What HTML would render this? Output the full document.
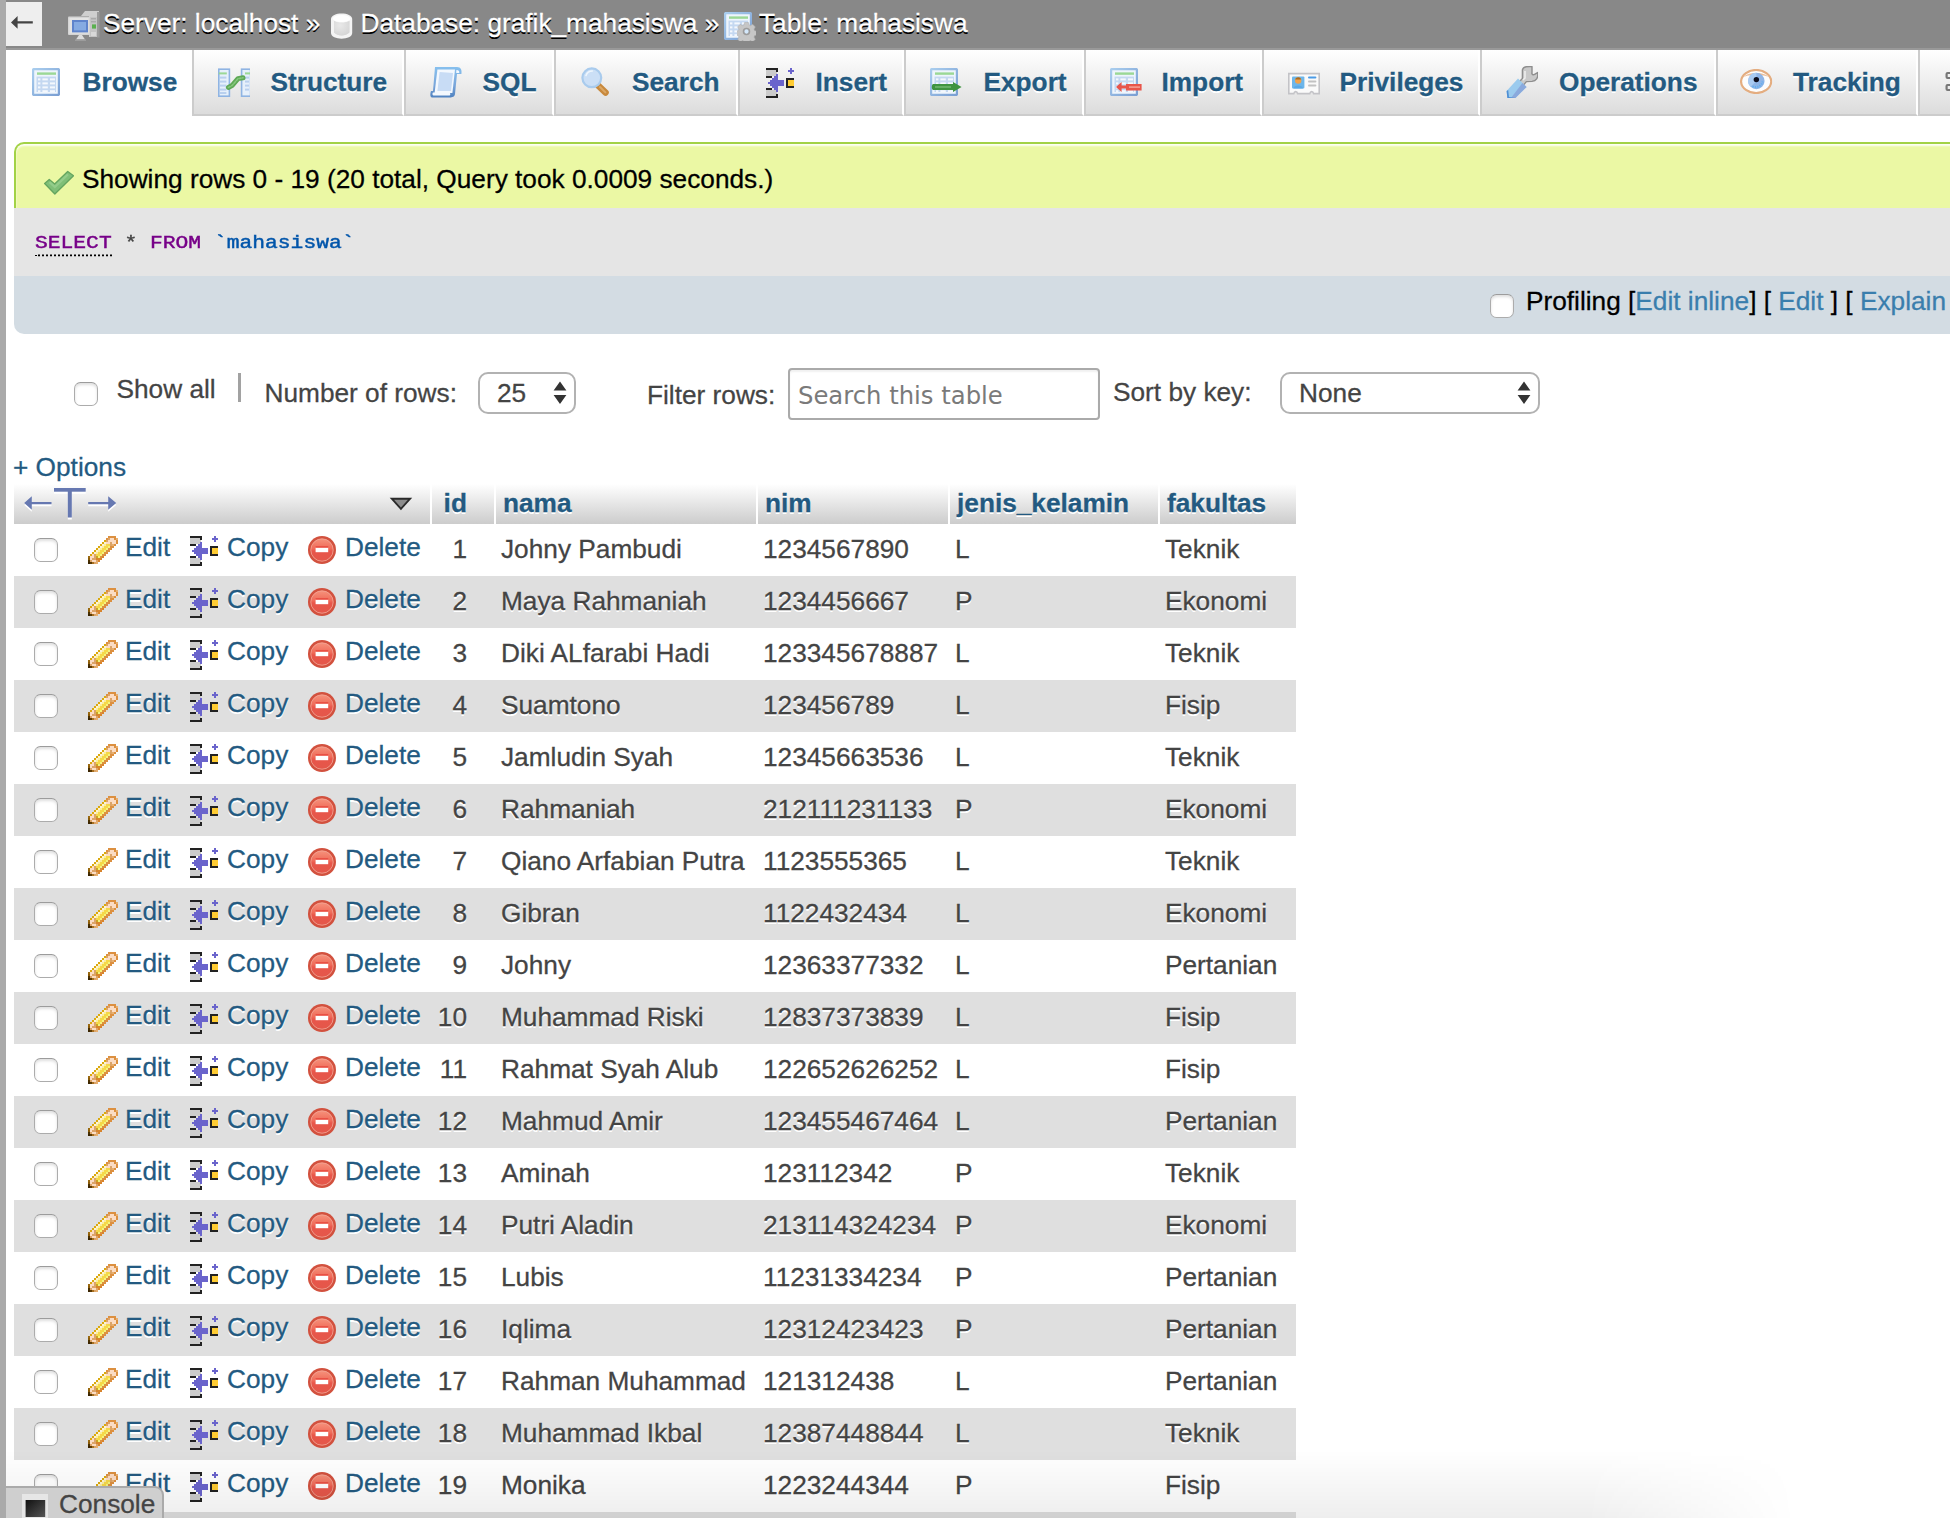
<!DOCTYPE html>
<html lang="en">
<head>
<meta charset="utf-8">
<title>localhost / localhost / grafik_mahasiswa / mahasiswa | phpMyAdmin</title>
<style>
*{box-sizing:border-box;}
html,body{margin:0;padding:0;}
body{width:1950px;height:1518px;overflow:hidden;position:relative;background:#fff;
 font-family:"Liberation Sans",sans-serif;font-size:26.24px;color:#444;-webkit-text-stroke:0.28px currentColor;}
a{color:#235a81;text-decoration:none;}
svg{display:block;overflow:visible;}
#strip{position:absolute;left:0;top:0;width:6px;height:1518px;background:#aaa;}
#topbar{position:absolute;left:6px;top:0;width:1944px;height:50px;background:#888;border-bottom:2px solid #999;}
#back{position:absolute;left:0;top:2px;width:36px;height:44px;background:#eee;}
#back svg{position:absolute;left:5px;top:11px;}
#crumbs{position:absolute;left:0;top:0;height:48px;color:#fff;white-space:nowrap;text-shadow:0 2px 0 #000;}
#crumbs span{position:absolute;top:8px;line-height:30px;white-space:nowrap;}
#crumbs svg{position:absolute;top:10px;}
/* tabs */
#tabs{position:absolute;left:6px;top:50px;width:1944px;height:66px;}
.tab{position:absolute;top:0;height:66px;border-left:2px solid #ccc;border-right:2px solid #fff;border-bottom:2px solid #ccc;
 background:linear-gradient(#fff,#dcdcdc);font-weight:bold;color:#235a81;text-shadow:0 2px 0 #fff;white-space:nowrap;}
.tab.active{background:#fff;border-bottom-color:#fff;border-left-color:#fff;}
.tab svg{position:absolute;left:24px;top:16px;}
.tab span{position:absolute;top:17px;line-height:30px;}
/* result boxes */
#succ{position:absolute;left:14px;top:142px;width:1960px;height:66px;background:#ebf8a4;border:2px solid #a2d246;border-bottom:none;border-radius:10px 0 0 0;color:#000;box-shadow:inset 0 2px 2px rgba(255,255,255,.9);}
#succ svg{position:absolute;left:27px;top:26px;}
#succ span{position:absolute;left:66px;top:19.5px;line-height:30px;white-space:nowrap;}
#sql{position:absolute;left:14px;top:208px;width:1960px;height:68px;background:#e5e5e5;}
#sql code{position:absolute;left:21px;top:20px;line-height:28px;font-family:"Liberation Mono",monospace;font-size:21.3px;white-space:pre;color:#444;transform:scaleY(.83);transform-origin:0 19.6px;-webkit-text-stroke:0.5px currentColor;}
#sql .kw{color:#708;}
#sql .kw.u{border-bottom:2.4px dotted #000;padding-bottom:2px;}
#sql .id{color:#05a;}
#tools{position:absolute;left:14px;top:276px;width:1960px;height:58px;background:#d3dce3;border-radius:0 0 0 10px;color:#000;}
#tools span{position:absolute;top:10px;line-height:30px;white-space:nowrap;}
#tools a{color:#3a7ead;}
.cbx{position:absolute;width:24px;height:24px;border:1.3px solid #acacac;border-top-color:#9c9c9c;border-radius:6.5px;background:#fff;box-shadow:inset 0 2px 3px rgba(0,0,0,.13);}
/* nav */
#nav span{position:absolute;line-height:30px;white-space:nowrap;color:#444;}
.sel{position:absolute;background:#fff;border:2px solid #b2b2b2;border-radius:10px;color:#222;}
.sel span{position:absolute;top:3.5px;left:17px;line-height:30px;}
.sel svg{position:absolute;right:7px;top:7px;}
#filter{position:absolute;left:788px;top:368px;width:312px;height:52px;border:2px solid #aaa;border-radius:4px;background:#fff;box-shadow:inset 0 2px 2px rgba(0,0,0,.06);}
#filter span{position:absolute;left:8px;top:11px;line-height:30px;color:#7a7a7a;font-family:"DejaVu Sans","Liberation Sans",sans-serif;font-size:24.3px;white-space:nowrap;-webkit-text-stroke:0;}
#opts{position:absolute;left:13px;top:452px;line-height:30px;color:#235a81;white-space:nowrap;}
/* table */
#res{position:absolute;left:14px;top:484px;border-collapse:separate;border-spacing:0;table-layout:fixed;width:1282px;}
#res th{height:40px;padding:0;background:linear-gradient(#fff,#ccc);border-right:2px solid #fff;text-align:left;font-weight:bold;color:#235a81;text-shadow:0 2px 0 #fff;position:relative;white-space:nowrap;}
#res th:last-child{border-right:none;}
#res th a{position:absolute;left:7px;top:4px;line-height:30px;}
#res th.hid a{left:11.6px;}
#res td{height:52px;padding:0;position:relative;white-space:nowrap;text-shadow:0 2px 0 #fff;vertical-align:top;line-height:30px;padding-top:10px;}
#res tr.odd td{background:#fff;}
#res tr.even td{background:#dfdfdf;}
.h0{width:418px;}.hid{width:64px;}.hn{width:262px;}.hm{width:192px;}.hj{width:210px;}.hf{width:136px;}
.ftext{position:absolute;left:10px;top:0px;filter:drop-shadow(0 2px 0 #fff);}
.tri{position:absolute;left:374px;top:13px;}
.cb{position:absolute;left:20px;top:14px;width:24px;height:24px;border:1.3px solid #acacac;border-top-color:#9c9c9c;border-radius:6.5px;background:#fff;box-shadow:inset 0 2px 3px rgba(0,0,0,.13);}
.act{position:absolute;top:8px;line-height:30px;}
.ri{position:absolute;top:12px;}
.ri.e{left:74px;}.ri.c{left:176px;}.ri.d{left:294px;}
.act.e{left:111px;}
.act.c{left:213px;}
.act.d{left:331px;}
td.cid{text-align:right;padding-right:29px!important;}
td.cn{padding-left:5px!important;}
td.cm{padding-left:5px!important;}
td.cj{padding-left:5px!important;}
td.cf{padding-left:5px!important;}
/* console */
#consolefade{position:absolute;left:6px;top:1450px;width:1944px;height:68px;pointer-events:none;background:linear-gradient(to bottom,rgba(0,0,0,0),rgba(0,0,0,.065));-webkit-mask-image:linear-gradient(to right,#000 0,#000 1580px,transparent 1790px);mask-image:linear-gradient(to right,#000 0,#000 1580px,transparent 1790px);}
#console{position:absolute;left:6px;top:1486px;width:158px;height:40px;background:#cfcfcf;border:2px solid #aaa;border-left:none;border-radius:0 9px 0 0;color:#444;}
#console span{position:absolute;left:53px;top:1px;line-height:30px;}
#consolebar{position:absolute;left:166px;top:1510px;width:1784px;height:8px;background:#d0d0d0;}
</style>
</head>
<body>
<svg width="0" height="0" style="position:absolute">
<defs>
<linearGradient id="g-tblb" x1="0" y1="0" x2="1" y2="1"><stop offset="0" stop-color="#a9cdee"/><stop offset="1" stop-color="#7a9fd3"/></linearGradient>
<linearGradient id="g-pen" x1="0" y1="0" x2="1" y2="1"><stop offset="0" stop-color="#fff6b0"/><stop offset=".5" stop-color="#f5d848"/><stop offset="1" stop-color="#e08a2a"/></linearGradient>
<linearGradient id="g-del" x1="0" y1="0" x2="0" y2="1"><stop offset="0" stop-color="#f6927c"/><stop offset=".45" stop-color="#ef6a58"/><stop offset=".55" stop-color="#e8564a"/><stop offset="1" stop-color="#e4574a"/></linearGradient>
<linearGradient id="g-sql" x1="0" y1="0" x2="0" y2="1"><stop offset="0" stop-color="#86c0ee"/><stop offset=".6" stop-color="#7aa6da"/><stop offset="1" stop-color="#4f82c0"/></linearGradient>
<linearGradient id="g-con" x1="0" y1="0" x2="1" y2="1"><stop offset="0" stop-color="#111"/><stop offset="1" stop-color="#555"/></linearGradient>
<radialGradient id="g-db" cx=".4" cy=".3" r=".8"><stop offset="0" stop-color="#fff"/><stop offset="1" stop-color="#d9d9d9"/></radialGradient>
<!-- table (browse) glyph 28x28 -->
<symbol id="i-table" viewBox="0 0 28 28">
 <rect x="1" y="1" width="26" height="26" rx="1.5" fill="#eef5fc" stroke="url(#g-tblb)" stroke-width="2.4"/>
 <rect x="5" y="4.4" width="19" height="2.4" fill="#9bd896"/>
 <rect x="4.5" y="8.6" width="19.5" height="15.4" fill="#c4d8f1"/>
 <g fill="#f4f8fd"><rect x="6" y="10.4" width="2.4" height="2"/><rect x="10.4" y="10.4" width="5.4" height="2"/><rect x="18" y="10.4" width="5" height="2"/>
 <rect x="6" y="14.4" width="2.4" height="2"/><rect x="10.4" y="14.4" width="5.4" height="2"/><rect x="18" y="14.4" width="5" height="2"/>
 <rect x="6" y="18.4" width="2.4" height="2"/><rect x="10.4" y="18.4" width="5.4" height="2"/><rect x="18" y="18.4" width="5" height="2"/>
 <rect x="6" y="22.2" width="2.4" height="1.8"/><rect x="10.4" y="22.2" width="5.4" height="1.8"/><rect x="18" y="22.2" width="5" height="1.8"/></g>
</symbol>
<!-- server 32x32 -->
<symbol id="i-server" viewBox="0 0 32 32">
 <path d="M13 6 L17 1 L31 1 L31 27 L21 27 L21 6 Z" fill="#cfcfcf"/>
 <path d="M22 7 L31 7 L31 27 L22 27 Z" fill="#c4c4c4"/>
 <rect x="29" y="2" width="2.5" height="25.5" fill="#9a9a9a"/>
 <rect x="23" y="8" width="5" height="1.4" fill="#aaa"/><rect x="23" y="11" width="5" height="1.4" fill="#aaa"/>
 <rect x="24" y="14.4" width="4" height="4.2" fill="#5ab04e"/>
 <rect x="23" y="22" width="5" height="4" fill="#d8d8d8"/>
 <rect x="0" y="6.6" width="22" height="18.4" rx="1" fill="#d4d4d4"/>
 <rect x="1.4" y="8" width="19.2" height="15.6" fill="#e3e3e3"/>
 <rect x="4" y="10" width="16" height="12.4" fill="#5f84cc"/>
 <rect x="6" y="12" width="12" height="8.4" fill="#86abe2"/>
 <path d="M11 25 L14 25 L17 29.4 L8 29.4 Z" fill="#dcdcdc"/>
 <rect x="7" y="29.4" width="11" height="1.6" fill="#9c9c9c"/>
</symbol>
<!-- db 32x32 -->
<symbol id="i-db" viewBox="0 0 32 32">
 <path d="M5 9 C5 1.5 26.2 1.5 26.2 9 L26.2 23 C26.2 30.5 5 30.5 5 23 Z" fill="#f4f4f4"/>
 <path d="M8 11 C12 13.4 19.4 13.4 23.4 11 L23.4 22.5 C19.4 26.5 12 26.5 8 22.5 Z" fill="#cdcdcd"/>
 <path d="M8 11 C12 13.4 19.4 13.4 23.4 11 L23.4 22.5 C19.4 26.5 12 26.5 8 22.5 Z" fill="url(#g-db)" opacity=".55"/>
 <ellipse cx="15.6" cy="8.5" rx="8.8" ry="3.6" fill="#fff"/>
</symbol>
<!-- gear -->
<symbol id="i-gear" viewBox="-10 -10 20 20">
 <g fill="#c6c6c6" stroke="#acacac" stroke-width=".6">
 <path d="M-2 -9.5h4l.6 2.6 1.6.7 2.3-1.4 2.8 2.8-1.4 2.3.7 1.6 2.6.6v4l-2.6.6-.7 1.6 1.4 2.3-2.8 2.8-2.3-1.4-1.6.7-.6 2.6h-4l-.6-2.6-1.6-.7-2.3 1.4-2.8-2.8 1.4-2.3-.7-1.6-2.6-.6v-4l2.6-.6.7-1.6-1.4-2.3 2.8-2.8 2.3 1.4 1.6-.7z"/></g>
 <circle r="3.1" fill="#d4e8fb" stroke="#9c9c9c" stroke-width="1.7"/>
</symbol>
<!-- structure 32x32 -->
<symbol id="i-struct" viewBox="0 0 32 32">
 <rect x="0.8" y="3.2" width="10.6" height="27" fill="#e6f0fb" stroke="#8fb4e3" stroke-width="1.6"/>
 <rect x="23.6" y="3.2" width="9" height="27" fill="#e6f0fb" stroke="#8fb4e3" stroke-width="1.6"/>
 <rect x="0.8" y="6.4" width="8" height="2" fill="#9bd896"/><rect x="27" y="6.4" width="5" height="2" fill="#9bd896"/>
 <g fill="#b9d0ee"><rect x="2" y="10.6" width="6.4" height="2"/><rect x="2" y="14.6" width="6.4" height="2"/><rect x="2" y="18.6" width="6.4" height="2"/><rect x="2" y="22.6" width="6.4" height="2"/><rect x="2" y="26" width="6.4" height="2"/>
 <rect x="27" y="10.6" width="4" height="2"/><rect x="27" y="14.6" width="4" height="2"/><rect x="27" y="18.6" width="4" height="2"/><rect x="27" y="22.6" width="4" height="2"/></g>
 <path d="M10.4 21.4 L14 19.6 L20 12.6 L25 11.8" fill="none" stroke="#5ea856" stroke-width="5" stroke-linecap="round" stroke-linejoin="round"/>
 <path d="M10.4 21.4 L14 19.6 L20 12.6 L25 11.8" fill="none" stroke="#86c87d" stroke-width="1.6" stroke-linecap="round" stroke-linejoin="round" stroke-dasharray="2 1.6"/>
</symbol>
<!-- sql scroll 32x32 -->
<symbol id="i-sql" viewBox="0 0 32 32">
 <path d="M5 1 L27 1 C31 1 32 4 31.4 8 L27 8 L25 28 C24.6 31 22 31.4 20 31.4 L2 31.4 C0 31 0 28 1 25 L3 25 Z" fill="url(#g-sql)"/>
 <path d="M7.4 3.4 L25 3.4 L22.4 27 L4.6 27 Z" fill="#f3f8fe"/>
 <path d="M9.6 6 L23 7 L21 25 L7.4 25 Z" fill="#c8dcf5"/>
 <path d="M3 26.6 L19.4 26.6 C20.6 27.6 20.6 29 19.6 29.6 L3.4 29.6 C2.2 29 2.2 27.4 3 26.6 Z" fill="#f3f8fe"/>
 <path d="M26.4 4 C29 4 29.6 5.6 29.2 7 L26.2 7 Z" fill="#f3f8fe"/>
</symbol>
<!-- search 32x32 -->
<symbol id="i-search" viewBox="0 0 32 32">
 <path d="M18 19.4 L25.6 26.6" stroke="#c8893c" stroke-width="6.4" stroke-linecap="round" fill="none"/>
 <path d="M20 21 L25.4 26.4" stroke="#dba765" stroke-width="2" stroke-linecap="round" fill="none"/>
 <circle cx="11.8" cy="11.8" r="9.4" fill="#cbdff6" stroke="#a9cbed" stroke-width="2.2"/>
 <path d="M6 9.5 C7 6.6 9.6 5 12.4 5" stroke="#eef6fd" stroke-width="1.6" fill="none" stroke-linecap="round"/>
</symbol>
<!-- insert / copy 32x32 pixel icon, units of 2px, glyph origin at (2,2) in tabs -->
<symbol id="i-ins" viewBox="0 0 14 15" shape-rendering="crispEdges">
 <rect x="0" y="1" width="5.6" height="3" fill="#ccc"/><rect x="0" y="11" width="5.6" height="3" fill="#ccc"/>
 <g fill="#222"><rect x="0" y="0" width="6" height="1"/><rect x="5" y="1" width="1" height="1"/><rect x="0" y="4" width="3" height="1"/>
 <rect x="0" y="10" width="3" height="1"/><rect x="5" y="13" width="1" height="1"/><rect x="0" y="14" width="6" height="1"/>
 <rect x="10" y="5" width="4" height="5"/></g>
 <rect x="11" y="6" width="3" height="3" fill="#fc3"/>
 <g fill="#6a64cc"><rect x="1" y="7" width="1" height="1"/><rect x="2" y="6" width="1" height="3"/><rect x="3" y="5" width="1" height="5"/><rect x="4" y="4" width="1" height="7"/><rect x="5" y="3" width="1" height="9"/><rect x="6" y="6" width="3" height="3"/></g>
 <path d="M12 0h1v1h1v1h-1v1h-1v-1h-1v-1h1z" fill="#6a64cc"/>
</symbol>
<!-- export 32x32 -->
<symbol id="i-export" viewBox="0 0 32 32">
 <use href="#i-table" x="0" y="2" width="28" height="28"/>
 <path d="M3 18 L23 18 L23 16 L31.6 21 L23 26 L23 24 L3 24 C1.4 23 1.4 19 3 18 Z" fill="#3f9440"/>
 <path d="M5 20.4 L21 20.4 L21 21.6 L5 21.6 Z" fill="#7fc27c"/>
</symbol>
<!-- import 32x32 -->
<symbol id="i-import" viewBox="0 0 32 32">
 <use href="#i-table" x="0" y="2" width="28" height="28"/>
 <path d="M6 21 L11.6 16 L11.6 19.6 L16 19.6 L16 18 L31.6 18 L31.6 24.4 L16 24.4 L16 22.6 L11.6 22.6 L11.6 26 Z" fill="#e8554a"/>
 <rect x="19" y="20.4" width="11" height="1.4" fill="#f6a79c"/>
</symbol>
<!-- privileges 32x32 -->
<symbol id="i-priv" viewBox="0 0 32 32">
 <path d="M0.8 7.6 L31.2 7.6 L31.2 27.6 L25.6 27.6 C25 25 22.4 25 21.8 27.6 L9.6 27.6 C9 25 6.4 25 5.8 27.6 L0.8 27.6 Z" fill="#fafafa" stroke="#c3c3c7" stroke-width="1.6"/>
 <rect x="4" y="10.4" width="12.4" height="12" rx="1" fill="#6db6ea"/>
 <circle cx="10.2" cy="14.6" r="3.2" fill="#f0a24a"/>
 <path d="M7.2 13.4 C8 10.6 12.4 10.6 13.2 13.4 Z" fill="#a86a20"/>
 <path d="M5.4 22.4 C6 18.6 14.4 18.6 15 22.4 Z" fill="#5aa9e6"/>
 <rect x="20" y="10.4" width="8.4" height="2" rx="1" fill="#4a9be6"/>
 <rect x="20" y="14.4" width="8.4" height="2" rx="1" fill="#c2c2c2"/>
 <rect x="20" y="18.4" width="8.4" height="2" rx="1" fill="#c2c2c2"/>
</symbol>
<!-- wrench 32x32 -->
<symbol id="i-ops" viewBox="0 0 32 32">
 <path d="M12.6 16.4 L16.4 12.6 L16.4 4 C17 1 20 0 26 0.6 L26 6.4 C25.4 8 27 9.4 28.6 8.4 L31.6 6.6 C32.6 12 30 15 26 15.4 L20.4 15.6 L17 19.6 Z" fill="#c9c9c9" stroke="#8e8e8e" stroke-width="1.4" stroke-linejoin="round"/>
 <path d="M19 5 L19 12 L17 14" stroke="#eee" stroke-width="1.6" fill="none"/>
 <path d="M12 12.6 L20.6 21 L8.4 33 L1.4 32.6 L0.6 25 Z" fill="#9bcbee"/>
 <path d="M16.4 17 L20.6 21 L8.4 33 L4.4 32.8 Z" fill="#8aa9dc"/>
 <path d="M0.6 25 L1.4 32.6 L8.4 33 L9.4 32 L3 31 L2.2 24 Z" fill="#4f8fd4"/>
</symbol>
<!-- eye 32x32 -->
<symbol id="i-eye" viewBox="0 0 32 25">
 <path d="M0.9 12.5 C1.2 5.5 8.6 1 16 1 C23.4 1 30.8 5.5 31.1 12.5 C30.8 19.5 23.4 24 16 24 C8.6 24 1.2 19.5 0.9 12.5 Z" fill="#fdfdfd" stroke="#e4ad80" stroke-width="2.2"/>
 <path d="M3.4 8 C8 2.8 24 2.8 28.6 8 C24 5.2 8 5.2 3.4 8 Z" fill="#ebbd98"/>
 <circle cx="16.2" cy="12" r="8.2" fill="#8fb4e6"/>
 <path d="M16.2 3.8 A8.2 8.2 0 0 0 10.4 17.8 L16.2 12 Z" fill="#a9caf1"/>
 <path d="M12.4 17.4 C16 19.2 21 17.6 22.6 12.6" stroke="#5fb0f0" stroke-width="2" fill="none" stroke-dasharray="1.2 1.2"/>
 <circle cx="16.2" cy="10.6" r="2.7" fill="#0c0c1c"/>
</symbol>
<!-- check 32x26 -->
<symbol id="i-check" viewBox="0 0 32 26">
 <path d="M1.6 14 L6.4 9.8 L12 14.6 L25.6 1.6 L31.6 6 L12.2 25 Z" fill="#7fbf77" stroke="#64a55f" stroke-width="1.4" stroke-linejoin="round"/>
 <path d="M6.6 12.6 L12.2 17.6 L25.8 4.6" fill="none" stroke="#93cc8a" stroke-width="2.4"/>
</symbol>
<!-- pencil 30x28 -->
<symbol id="i-edit" viewBox="0 0 15 14" shape-rendering="crispEdges"><rect x="10" y="0" width="4" height="1" fill="#dc9040"/><rect x="9" y="1" width="1" height="1" fill="#dc9040"/><rect x="10" y="1" width="1" height="1" fill="#dca468"/><rect x="11" y="1" width="2" height="1" fill="#fbdcc4"/><rect x="13" y="1" width="1" height="1" fill="#dc9040"/><rect x="14" y="1" width="1" height="1" fill="#e8b070"/><rect x="8" y="2" width="1" height="1" fill="#dba90e"/><rect x="9" y="2" width="1" height="1" fill="#dca468"/><rect x="10" y="2" width="4" height="1" fill="#fbdcc4"/><rect x="14" y="2" width="1" height="1" fill="#dc9040"/><rect x="7" y="3" width="1" height="1" fill="#dba90e"/><rect x="8" y="3" width="1" height="1" fill="#fdf3d6"/><rect x="9" y="3" width="2" height="1" fill="#fbdcc4"/><rect x="11" y="3" width="1" height="1" fill="#dca468"/><rect x="12" y="3" width="2" height="1" fill="#fbdcc4"/><rect x="14" y="3" width="1" height="1" fill="#dc9040"/><rect x="6" y="4" width="1" height="1" fill="#dba90e"/><rect x="7" y="4" width="1" height="1" fill="#fdf3d6"/><rect x="8" y="4" width="1" height="1" fill="#faee9c"/><rect x="9" y="4" width="2" height="1" fill="#f5d848"/><rect x="11" y="4" width="1" height="1" fill="#dca468"/><rect x="12" y="4" width="1" height="1" fill="#e8b070"/><rect x="13" y="4" width="1" height="1" fill="#dc9040"/><rect x="5" y="5" width="1" height="1" fill="#dba90e"/><rect x="6" y="5" width="1" height="1" fill="#fdf3d6"/><rect x="7" y="5" width="1" height="1" fill="#faee9c"/><rect x="8" y="5" width="2" height="1" fill="#f5d848"/><rect x="10" y="5" width="1" height="1" fill="#f3f47e"/><rect x="11" y="5" width="2" height="1" fill="#dc9040"/><rect x="4" y="6" width="1" height="1" fill="#dba90e"/><rect x="5" y="6" width="1" height="1" fill="#fdf3d6"/><rect x="6" y="6" width="1" height="1" fill="#faee9c"/><rect x="7" y="6" width="2" height="1" fill="#f5d848"/><rect x="9" y="6" width="1" height="1" fill="#f3f47e"/><rect x="10" y="6" width="2" height="1" fill="#dc9040"/><rect x="3" y="7" width="1" height="1" fill="#dba90e"/><rect x="4" y="7" width="1" height="1" fill="#fdf3d6"/><rect x="5" y="7" width="1" height="1" fill="#faee9c"/><rect x="6" y="7" width="2" height="1" fill="#f5d848"/><rect x="8" y="7" width="1" height="1" fill="#f3f47e"/><rect x="9" y="7" width="2" height="1" fill="#dc9040"/><rect x="2" y="8" width="1" height="1" fill="#dba90e"/><rect x="3" y="8" width="1" height="1" fill="#fdf3d6"/><rect x="4" y="8" width="1" height="1" fill="#faee9c"/><rect x="5" y="8" width="2" height="1" fill="#f5d848"/><rect x="7" y="8" width="1" height="1" fill="#f3f47e"/><rect x="8" y="8" width="2" height="1" fill="#dc9040"/><rect x="1" y="9" width="1" height="1" fill="#dba90e"/><rect x="2" y="9" width="1" height="1" fill="#fbdcc4"/><rect x="3" y="9" width="1" height="1" fill="#dca468"/><rect x="4" y="9" width="2" height="1" fill="#f5d848"/><rect x="6" y="9" width="1" height="1" fill="#f3f47e"/><rect x="7" y="9" width="2" height="1" fill="#dc9040"/><rect x="0" y="10" width="1" height="1" fill="#9a6a10"/><rect x="1" y="10" width="2" height="1" fill="#fbdcc4"/><rect x="3" y="10" width="1" height="1" fill="#dca468"/><rect x="4" y="10" width="1" height="1" fill="#c8a424"/><rect x="5" y="10" width="1" height="1" fill="#f3f47e"/><rect x="6" y="10" width="1" height="1" fill="#dc9040"/><rect x="7" y="10" width="1" height="1" fill="#d8842c"/><rect x="0" y="11" width="1" height="1" fill="#8a5a08"/><rect x="1" y="11" width="1" height="1" fill="#fbdcc4"/><rect x="2" y="11" width="2" height="1" fill="#dca468"/><rect x="4" y="11" width="3" height="1" fill="#d8842c"/><rect x="0" y="12" width="1" height="1" fill="#4a3000"/><rect x="1" y="12" width="1" height="1" fill="#dca468"/><rect x="2" y="12" width="2" height="1" fill="#fbdcc4"/><rect x="4" y="12" width="1" height="1" fill="#dca468"/><rect x="5" y="12" width="1" height="1" fill="#d8842c"/><rect x="0" y="13" width="1" height="1" fill="#3a2400"/><rect x="1" y="13" width="1" height="1" fill="#5a3a04"/><rect x="2" y="13" width="1" height="1" fill="#a87020"/><rect x="3" y="13" width="1" height="1" fill="#dca468"/><rect x="4" y="13" width="1" height="1" fill="#e8b070"/></symbol>
<!-- delete 28x28 -->
<symbol id="i-del" viewBox="0 0 28 28">
 <circle cx="14" cy="14" r="14" fill="#d2513e"/>
 <circle cx="14" cy="14" r="11.2" fill="url(#g-del)"/>
 <circle cx="14" cy="14" r="11.2" fill="none" stroke="#f3a898" stroke-width="1" opacity=".8"/>
 <rect x="7.6" y="11.6" width="12.6" height="4.6" fill="#fff"/>
 <rect x="7.6" y="10.2" width="12.6" height="1.4" fill="#e8493e"/>
</symbol>
<!-- <-T-> -->
<symbol id="i-ftext" viewBox="0 0 96 36">
 <g fill="#6678b1">
 <path d="M0.2 19 L7.8 12.2 L7.8 17.9 L27.5 17.9 L27.5 20.2 L7.8 20.2 L7.8 25.8 Z"/>
 <rect x="30" y="4" width="31.7" height="3.7"/><rect x="43.8" y="7" width="4" height="26.5"/>
 <path d="M92.2 19 L84.2 12.2 L84.2 17.9 L64.2 17.9 L64.2 20.2 L84.2 20.2 L84.2 25.8 Z"/>
 </g>
</symbol>
<symbol id="i-tri" viewBox="0 0 26 14">
 <path d="M1.7 0.8 L24.2 0.8 L12.95 13.2 Z" fill="#2a2a2a"/><path d="M6 2.8 L19.9 2.8 L12.95 10.4 Z" fill="#8c8c8c"/>
</symbol>
<symbol id="i-updown" viewBox="0 0 14 24">
 <path d="M7 0.5 L13.4 9.4 L0.6 9.4 Z M0.6 14 L13.4 14 L7 23 Z" fill="#333"/>
</symbol>
</defs>
</svg>
<div id="strip"></div>
<div id="topbar">
 <div id="back"><svg width="24" height="20" viewBox="0 0 24 20"><path d="M0 9.4 L6.6 3 L6.6 8.3 L21.8 8.3 L21.8 10.6 L6.6 10.6 L6.6 15.8 Z" fill="#444"/></svg></div>
 <div id="crumbs">
  <svg style="left:62px" width="32" height="32"><use href="#i-server"/></svg>
  <span style="left:97px">Server: localhost »</span>
  <svg style="left:320px" width="32" height="32"><use href="#i-db"/></svg>
  <span style="left:354.5px">Database: grafik_mahasiswa »</span>
  <svg style="left:718px;top:12px" width="28" height="28"><use href="#i-table"/></svg>
  <svg style="left:730.5px;top:22px" width="19" height="19"><use href="#i-gear"/></svg>
  <span style="left:753px">Table: mahasiswa</span>
 </div>
</div>
<div id="tabs">
 <div class="tab active" style="left:0;width:186px"><svg width="28" height="28" style="left:24px;top:18px"><use href="#i-table"/></svg><span style="left:74.5px">Browse</span></div>
 <div class="tab" style="left:186px;width:212px"><svg width="32" height="32" style="overflow:hidden"><use href="#i-struct"/></svg><span style="left:76.5px">Structure</span></div>
 <div class="tab" style="left:398px;width:150px"><svg width="32" height="32"><use href="#i-sql"/></svg><span style="left:76.5px">SQL</span></div>
 <div class="tab" style="left:548px;width:184px"><svg width="32" height="32"><use href="#i-search"/></svg><span style="left:76px">Search</span></div>
 <div class="tab" style="left:732px;width:166px"><svg width="28" height="30" style="left:26px;top:18px"><use href="#i-ins"/></svg><span style="left:75.5px">Insert</span></div>
 <div class="tab" style="left:898px;width:180px"><svg width="32" height="32"><use href="#i-export"/></svg><span style="left:77.5px">Export</span></div>
 <div class="tab" style="left:1078px;width:178px"><svg width="32" height="32"><use href="#i-import"/></svg><span style="left:75.5px">Import</span></div>
 <div class="tab" style="left:1256px;width:218px"><svg width="32" height="32"><use href="#i-priv"/></svg><span style="left:75.5px">Privileges</span></div>
 <div class="tab" style="left:1474px;width:236px"><svg width="32" height="32"><use href="#i-ops"/></svg><span style="left:77px">Operations</span></div>
 <div class="tab" style="left:1710px;width:202px"><svg width="32.3" height="25" style="left:22px;top:19.3px"><use href="#i-eye"/></svg><span style="left:75px">Tracking</span></div>
 <div class="tab" style="left:1912px;width:100px"><svg width="32" height="32" viewBox="0 0 32 32"><g fill="none" stroke="#777" stroke-width="2.2"><rect x="2.6" y="7" width="6" height="5" rx="1"/><rect x="2.6" y="19" width="6" height="5" rx="1"/></g></svg><span style="left:77px">More</span></div>
</div>
<div id="succ"><svg width="31" height="25"><use href="#i-check"/></svg><span>Showing rows 0 - 19 (20 total, Query took 0.0009 seconds.)</span></div>
<div id="sql"><code><span class="kw u">SELECT</span> * <span class="kw">FROM</span> <span class="id">`mahasiswa`</span></code></div>
<div id="tools">
 <div class="cbx" style="left:1476px;top:18px"></div>
 <span style="left:1512px">Profiling [<a>Edit inline</a>] [ <a>Edit</a> ] [ <a>Explain SQL</a> ] [ <a>Create PHP code</a> ] [ <a>Refresh</a> ]</span>
</div>
<div id="nav">
 <div class="cbx" style="left:74px;top:382px"></div>
 <span style="left:116.5px;top:374px">Show all</span>
 <div style="position:absolute;left:238px;top:373px;width:3.4px;height:28.5px;background:#a2a2a2"></div>
 <span style="left:264.5px;top:377.5px">Number of rows:</span>
 <div class="sel" style="left:478px;top:372px;width:98px;height:42px"><span>25</span><svg width="14" height="24"><use href="#i-updown"/></svg></div>
 <span style="left:647px;top:380px">Filter rows:</span>
 <div id="filter"><span>Search this table</span></div>
 <span style="left:1113px;top:377px">Sort by key:</span>
 <div class="sel" style="left:1280px;top:372px;width:260px;height:42px"><span>None</span><svg width="14" height="24"><use href="#i-updown"/></svg></div>
</div>
<div id="opts">+ Options</div>
<table id="res"><thead><tr><th class="h0"><svg class="ftext" width="96" height="36" viewBox="0 0 96 36"><use href="#i-ftext"/></svg><svg class="tri" width="26" height="14" viewBox="0 0 26 14"><use href="#i-tri"/></svg></th><th class="hid"><a>id</a></th><th class="hn"><a>nama</a></th><th class="hm"><a>nim</a></th><th class="hj"><a>jenis_kelamin</a></th><th class="hf"><a>fakultas</a></th></tr></thead>
<tbody>
<tr class="odd"><td class="c0"><span class="cb"></span><svg class="ri e" width="30" height="28"><use href="#i-edit"/></svg><a class="act e">Edit</a><svg class="ri c" width="28" height="30"><use href="#i-ins"/></svg><a class="act c">Copy</a><svg class="ri d" width="28" height="28"><use href="#i-del"/></svg><a class="act d">Delete</a></td><td class="cid">1</td><td class="cn">Johny Pambudi</td><td class="cm">1234567890</td><td class="cj">L</td><td class="cf">Teknik</td></tr>
<tr class="even"><td class="c0"><span class="cb"></span><svg class="ri e" width="30" height="28"><use href="#i-edit"/></svg><a class="act e">Edit</a><svg class="ri c" width="28" height="30"><use href="#i-ins"/></svg><a class="act c">Copy</a><svg class="ri d" width="28" height="28"><use href="#i-del"/></svg><a class="act d">Delete</a></td><td class="cid">2</td><td class="cn">Maya Rahmaniah</td><td class="cm">1234456667</td><td class="cj">P</td><td class="cf">Ekonomi</td></tr>
<tr class="odd"><td class="c0"><span class="cb"></span><svg class="ri e" width="30" height="28"><use href="#i-edit"/></svg><a class="act e">Edit</a><svg class="ri c" width="28" height="30"><use href="#i-ins"/></svg><a class="act c">Copy</a><svg class="ri d" width="28" height="28"><use href="#i-del"/></svg><a class="act d">Delete</a></td><td class="cid">3</td><td class="cn">Diki ALfarabi Hadi</td><td class="cm">123345678887</td><td class="cj">L</td><td class="cf">Teknik</td></tr>
<tr class="even"><td class="c0"><span class="cb"></span><svg class="ri e" width="30" height="28"><use href="#i-edit"/></svg><a class="act e">Edit</a><svg class="ri c" width="28" height="30"><use href="#i-ins"/></svg><a class="act c">Copy</a><svg class="ri d" width="28" height="28"><use href="#i-del"/></svg><a class="act d">Delete</a></td><td class="cid">4</td><td class="cn">Suamtono</td><td class="cm">123456789</td><td class="cj">L</td><td class="cf">Fisip</td></tr>
<tr class="odd"><td class="c0"><span class="cb"></span><svg class="ri e" width="30" height="28"><use href="#i-edit"/></svg><a class="act e">Edit</a><svg class="ri c" width="28" height="30"><use href="#i-ins"/></svg><a class="act c">Copy</a><svg class="ri d" width="28" height="28"><use href="#i-del"/></svg><a class="act d">Delete</a></td><td class="cid">5</td><td class="cn">Jamludin Syah</td><td class="cm">12345663536</td><td class="cj">L</td><td class="cf">Teknik</td></tr>
<tr class="even"><td class="c0"><span class="cb"></span><svg class="ri e" width="30" height="28"><use href="#i-edit"/></svg><a class="act e">Edit</a><svg class="ri c" width="28" height="30"><use href="#i-ins"/></svg><a class="act c">Copy</a><svg class="ri d" width="28" height="28"><use href="#i-del"/></svg><a class="act d">Delete</a></td><td class="cid">6</td><td class="cn">Rahmaniah</td><td class="cm">212111231133</td><td class="cj">P</td><td class="cf">Ekonomi</td></tr>
<tr class="odd"><td class="c0"><span class="cb"></span><svg class="ri e" width="30" height="28"><use href="#i-edit"/></svg><a class="act e">Edit</a><svg class="ri c" width="28" height="30"><use href="#i-ins"/></svg><a class="act c">Copy</a><svg class="ri d" width="28" height="28"><use href="#i-del"/></svg><a class="act d">Delete</a></td><td class="cid">7</td><td class="cn">Qiano Arfabian Putra</td><td class="cm">1123555365</td><td class="cj">L</td><td class="cf">Teknik</td></tr>
<tr class="even"><td class="c0"><span class="cb"></span><svg class="ri e" width="30" height="28"><use href="#i-edit"/></svg><a class="act e">Edit</a><svg class="ri c" width="28" height="30"><use href="#i-ins"/></svg><a class="act c">Copy</a><svg class="ri d" width="28" height="28"><use href="#i-del"/></svg><a class="act d">Delete</a></td><td class="cid">8</td><td class="cn">Gibran</td><td class="cm">1122432434</td><td class="cj">L</td><td class="cf">Ekonomi</td></tr>
<tr class="odd"><td class="c0"><span class="cb"></span><svg class="ri e" width="30" height="28"><use href="#i-edit"/></svg><a class="act e">Edit</a><svg class="ri c" width="28" height="30"><use href="#i-ins"/></svg><a class="act c">Copy</a><svg class="ri d" width="28" height="28"><use href="#i-del"/></svg><a class="act d">Delete</a></td><td class="cid">9</td><td class="cn">Johny</td><td class="cm">12363377332</td><td class="cj">L</td><td class="cf">Pertanian</td></tr>
<tr class="even"><td class="c0"><span class="cb"></span><svg class="ri e" width="30" height="28"><use href="#i-edit"/></svg><a class="act e">Edit</a><svg class="ri c" width="28" height="30"><use href="#i-ins"/></svg><a class="act c">Copy</a><svg class="ri d" width="28" height="28"><use href="#i-del"/></svg><a class="act d">Delete</a></td><td class="cid">10</td><td class="cn">Muhammad Riski</td><td class="cm">12837373839</td><td class="cj">L</td><td class="cf">Fisip</td></tr>
<tr class="odd"><td class="c0"><span class="cb"></span><svg class="ri e" width="30" height="28"><use href="#i-edit"/></svg><a class="act e">Edit</a><svg class="ri c" width="28" height="30"><use href="#i-ins"/></svg><a class="act c">Copy</a><svg class="ri d" width="28" height="28"><use href="#i-del"/></svg><a class="act d">Delete</a></td><td class="cid">11</td><td class="cn">Rahmat Syah Alub</td><td class="cm">122652626252</td><td class="cj">L</td><td class="cf">Fisip</td></tr>
<tr class="even"><td class="c0"><span class="cb"></span><svg class="ri e" width="30" height="28"><use href="#i-edit"/></svg><a class="act e">Edit</a><svg class="ri c" width="28" height="30"><use href="#i-ins"/></svg><a class="act c">Copy</a><svg class="ri d" width="28" height="28"><use href="#i-del"/></svg><a class="act d">Delete</a></td><td class="cid">12</td><td class="cn">Mahmud Amir</td><td class="cm">123455467464</td><td class="cj">L</td><td class="cf">Pertanian</td></tr>
<tr class="odd"><td class="c0"><span class="cb"></span><svg class="ri e" width="30" height="28"><use href="#i-edit"/></svg><a class="act e">Edit</a><svg class="ri c" width="28" height="30"><use href="#i-ins"/></svg><a class="act c">Copy</a><svg class="ri d" width="28" height="28"><use href="#i-del"/></svg><a class="act d">Delete</a></td><td class="cid">13</td><td class="cn">Aminah</td><td class="cm">123112342</td><td class="cj">P</td><td class="cf">Teknik</td></tr>
<tr class="even"><td class="c0"><span class="cb"></span><svg class="ri e" width="30" height="28"><use href="#i-edit"/></svg><a class="act e">Edit</a><svg class="ri c" width="28" height="30"><use href="#i-ins"/></svg><a class="act c">Copy</a><svg class="ri d" width="28" height="28"><use href="#i-del"/></svg><a class="act d">Delete</a></td><td class="cid">14</td><td class="cn">Putri Aladin</td><td class="cm">213114324234</td><td class="cj">P</td><td class="cf">Ekonomi</td></tr>
<tr class="odd"><td class="c0"><span class="cb"></span><svg class="ri e" width="30" height="28"><use href="#i-edit"/></svg><a class="act e">Edit</a><svg class="ri c" width="28" height="30"><use href="#i-ins"/></svg><a class="act c">Copy</a><svg class="ri d" width="28" height="28"><use href="#i-del"/></svg><a class="act d">Delete</a></td><td class="cid">15</td><td class="cn">Lubis</td><td class="cm">11231334234</td><td class="cj">P</td><td class="cf">Pertanian</td></tr>
<tr class="even"><td class="c0"><span class="cb"></span><svg class="ri e" width="30" height="28"><use href="#i-edit"/></svg><a class="act e">Edit</a><svg class="ri c" width="28" height="30"><use href="#i-ins"/></svg><a class="act c">Copy</a><svg class="ri d" width="28" height="28"><use href="#i-del"/></svg><a class="act d">Delete</a></td><td class="cid">16</td><td class="cn">Iqlima</td><td class="cm">12312423423</td><td class="cj">P</td><td class="cf">Pertanian</td></tr>
<tr class="odd"><td class="c0"><span class="cb"></span><svg class="ri e" width="30" height="28"><use href="#i-edit"/></svg><a class="act e">Edit</a><svg class="ri c" width="28" height="30"><use href="#i-ins"/></svg><a class="act c">Copy</a><svg class="ri d" width="28" height="28"><use href="#i-del"/></svg><a class="act d">Delete</a></td><td class="cid">17</td><td class="cn">Rahman Muhammad</td><td class="cm">121312438</td><td class="cj">L</td><td class="cf">Pertanian</td></tr>
<tr class="even"><td class="c0"><span class="cb"></span><svg class="ri e" width="30" height="28"><use href="#i-edit"/></svg><a class="act e">Edit</a><svg class="ri c" width="28" height="30"><use href="#i-ins"/></svg><a class="act c">Copy</a><svg class="ri d" width="28" height="28"><use href="#i-del"/></svg><a class="act d">Delete</a></td><td class="cid">18</td><td class="cn">Muhammad Ikbal</td><td class="cm">12387448844</td><td class="cj">L</td><td class="cf">Teknik</td></tr>
<tr class="odd"><td class="c0"><span class="cb"></span><svg class="ri e" width="30" height="28"><use href="#i-edit"/></svg><a class="act e">Edit</a><svg class="ri c" width="28" height="30"><use href="#i-ins"/></svg><a class="act c">Copy</a><svg class="ri d" width="28" height="28"><use href="#i-del"/></svg><a class="act d">Delete</a></td><td class="cid">19</td><td class="cn">Monika</td><td class="cm">1223244344</td><td class="cj">P</td><td class="cf">Fisip</td></tr>
<tr class="even"><td class="c0"></td><td></td><td></td><td></td><td></td><td></td></tr>
</tbody></table>
<div id="consolefade"></div>
<div id="console"><svg width="28" height="30" viewBox="0 0 28 30" style="position:absolute;left:16px;top:6px"><rect x="0" y="0" width="26" height="30" fill="#e6e6e6"/><rect x="3.6" y="6" width="19.6" height="17" fill="url(#g-con)"/></svg><span>Console</span></div>
</body>
</html>
